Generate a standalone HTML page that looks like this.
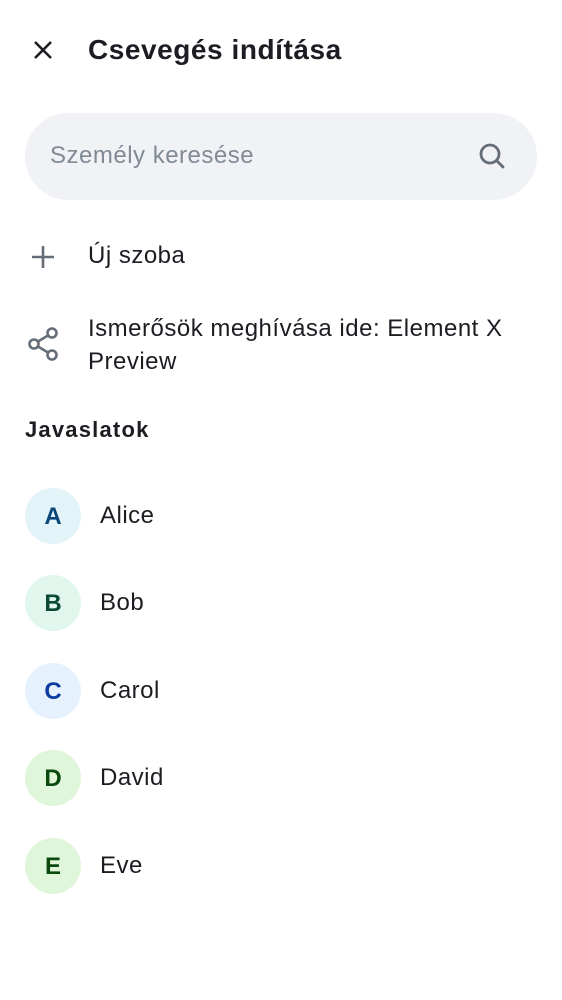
<!DOCTYPE html>
<html><head><meta charset="utf-8"><style>
body{margin:0;width:562px;height:1000px;background:#fff;font-family:"Liberation Sans",sans-serif;color:#1b1d22;position:relative;overflow:hidden}
.a{position:absolute}
.t{white-space:nowrap}
.av{position:absolute;left:25px;width:56px;height:56px;border-radius:50%;font-weight:bold;font-size:24px;line-height:58px;text-align:center}
.nm{position:absolute;left:100px;font-size:24px;line-height:28px;letter-spacing:0.5px}
</style></head><body>
<svg class="a" style="left:31px;top:38px" width="24" height="24" viewBox="0 0 24 24"><path d="M4 4L20 20M20 4L4 20" stroke="#1b1d22" stroke-width="2.6"/></svg>
<div class="a t" style="left:88px;top:32px;font-size:28px;line-height:36px;font-weight:bold;letter-spacing:0.55px">Csevegés indítása</div>
<div class="a" style="left:25px;top:113px;width:512px;height:87px;border-radius:44px;background:#f0f2f5"></div>
<div class="a t" style="left:50px;top:142px;font-size:24px;line-height:28px;color:#818a95;letter-spacing:0.5px">Személy keresése</div>
<svg class="a" style="left:477px;top:141px" width="30" height="30" viewBox="0 0 30 30"><circle cx="13" cy="13" r="9" fill="none" stroke="#656d77" stroke-width="2.8"/><path d="M19.5 19.5L26 26" stroke="#656d77" stroke-width="2.8" stroke-linecap="round"/></svg>
<svg class="a" style="left:30px;top:244px" width="26" height="26" viewBox="0 0 26 26"><path d="M13 2V24M2 13H24" stroke="#656d77" stroke-width="2.6"/></svg>
<div class="a t" style="left:88px;top:242px;font-size:24px;line-height:28px;letter-spacing:0.5px">Új szoba</div>
<svg class="a" style="left:27px;top:326px" width="32" height="36" viewBox="0 0 32 36"><g fill="none" stroke="#656d77" stroke-width="2.6"><circle cx="25" cy="7" r="4.5"/><circle cx="7" cy="18" r="4.5"/><circle cx="25" cy="29" r="4.5"/><path d="M11 15.5L21 9.5M11 20.5L21 26.5"/></g></svg>
<div class="a" style="left:88px;top:312px;font-size:24px;line-height:33px;width:450px;letter-spacing:0.5px">Ismerősök meghívása ide: Element X Preview</div>
<div class="a t" style="left:25px;top:416px;font-size:22px;line-height:28px;font-weight:bold;letter-spacing:1.2px">Javaslatok</div>
<div class="av" style="top:488px;background:#e2f4f8;color:#0a467a">A</div><div class="nm" style="top:502px">Alice</div>
<div class="av" style="top:575px;background:#e1f6ec;color:#0b4a36">B</div><div class="nm" style="top:589px">Bob</div>
<div class="av" style="top:663px;background:#e6f1fe;color:#0d3aa0">C</div><div class="nm" style="top:677px">Carol</div>
<div class="av" style="top:750px;background:#e0f6da;color:#0b4a0e">D</div><div class="nm" style="top:764px">David</div>
<div class="av" style="top:838px;background:#e0f6da;color:#0b4a0e">E</div><div class="nm" style="top:852px">Eve</div>
</body></html>
